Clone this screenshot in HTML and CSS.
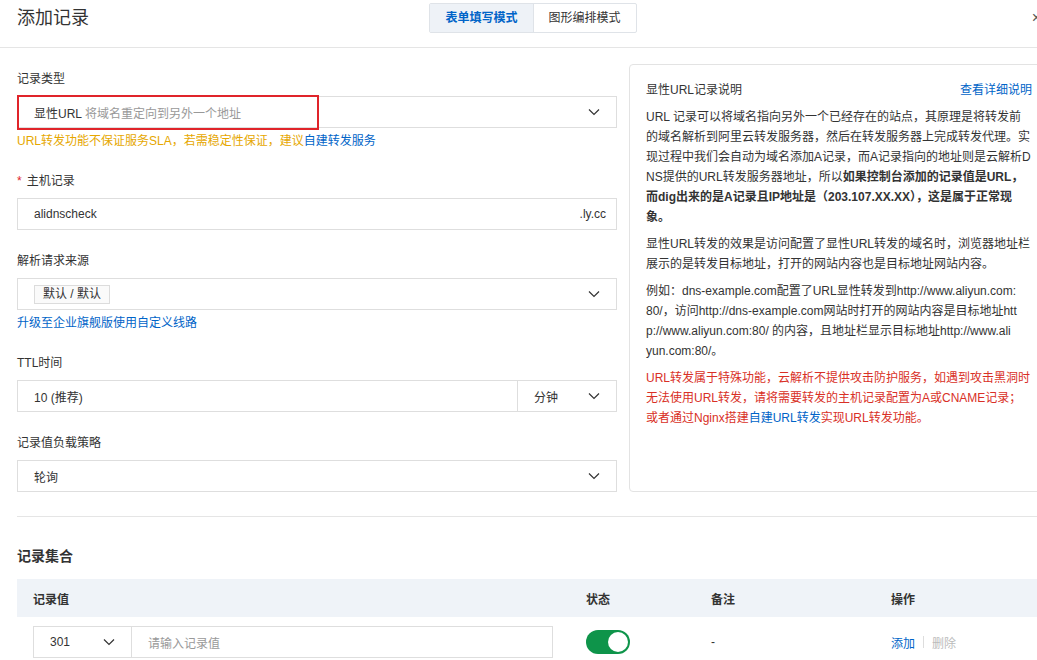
FILE: index.html
```html
<!DOCTYPE html>
<html lang="zh-CN">
<head>
<meta charset="utf-8">
<title>添加记录</title>
<link rel="stylesheet" href="styles.css">
</head>
<body>
<div class="page">
  <header class="hd">
    <h1 class="hd-title">添加记录</h1>
    <div class="tabs">
      <span class="tab active">表单填写模式</span>
      <span class="tab">图形编排模式</span>
    </div>
    <span class="close">×</span>
  </header>

  <main class="body">
    <div class="cols">
      <form class="form">
        <div class="field">
          <div class="label">记录类型</div>
          <div class="control select highlight-wrap">
            <span class="val">显性URL <span class="muted">将域名重定向到另外一个地址</span></span>
            <svg class="chev" width="12" height="12" viewBox="0 0 12 12"><path d="M1 3.5L6 8.5L11 3.5" fill="none" stroke="#333" stroke-width="1.2"/></svg>
            <span class="highlight"></span>
          </div>
          <div class="help warn">URL转发功能不保证服务SLA，若需稳定性保证，建议<a class="link">自建转发服务</a></div>
        </div>

        <div class="field">
          <div class="label"><span class="req">*</span>主机记录</div>
          <div class="control input">
            <span class="val">alidnscheck</span>
            <span class="suffix">.ly.cc</span>
          </div>
        </div>

        <div class="field">
          <div class="label">解析请求来源</div>
          <div class="control select">
            <span class="tag">默认 / 默认</span>
            <svg class="chev" width="12" height="12" viewBox="0 0 12 12"><path d="M1 3.5L6 8.5L11 3.5" fill="none" stroke="#333" stroke-width="1.2"/></svg>
          </div>
          <div class="help"><a class="link">升级至企业旗舰版使用自定义线路</a></div>
        </div>

        <div class="field">
          <div class="label">TTL时间</div>
          <div class="group">
            <div class="control g-main"><span class="val">10 (推荐)</span></div>
            <div class="control select g-unit">
              <span class="val">分钟</span>
              <svg class="chev" width="12" height="12" viewBox="0 0 12 12"><path d="M1 3.5L6 8.5L11 3.5" fill="none" stroke="#333" stroke-width="1.2"/></svg>
            </div>
          </div>
        </div>

        <div class="field">
          <div class="label">记录值负载策略</div>
          <div class="control select">
            <span class="val">轮询</span>
            <svg class="chev" width="12" height="12" viewBox="0 0 12 12"><path d="M1 3.5L6 8.5L11 3.5" fill="none" stroke="#333" stroke-width="1.2"/></svg>
          </div>
        </div>
      </form>

      <aside class="panel">
        <div class="panel-hd">
          <span class="panel-title">显性URL记录说明</span>
          <a class="link">查看详细说明</a>
        </div>
        <p>URL 记录可以将域名指向另外一个已经存在的站点，其原理是将转发前的域名解析到阿里云转发服务器，然后在转发服务器上完成转发代理。实现过程中我们会自动为域名添加A记录，而A记录指向的地址则是云解析DNS提供的URL转发服务器地址，所以<b>如果控制台添加的记录值是URL，而dig出来的是A记录且IP地址是（203.107.XX.XX），这是属于正常现象。</b></p>
        <p>显性URL转发的效果是访问配置了显性URL转发的域名时，浏览器地址栏展示的是转发目标地址，打开的网站内容也是目标地址网站内容。</p>
        <p>例如：dns-example.com配置了URL显性转发到http://www.aliyun.com:<br>80/，访问http://dns-example.com网站时打开的网站内容是目标地址htt<br>p://www.aliyun.com:80/ 的内容，且地址栏显示目标地址http://www.ali<br>yun.com:80/。</p>
        <p class="danger">URL转发属于特殊功能，云解析不提供攻击防护服务，如遇到攻击黑洞时无法使用URL转发，请将需要转发的主机记录配置为A或CNAME记录；或者通过Nginx搭建<a class="link">自建URL转发</a>实现URL转发功能。</p>
      </aside>
    </div>

    <section class="records">
      <h2 class="sec-title">记录集合</h2>
      <div class="table">
        <div class="tr th">
          <div class="td">记录值</div>
          <div class="td">状态</div>
          <div class="td">备注</div>
          <div class="td">操作</div>
        </div>
        <div class="tr">
          <div class="td c1">
            <div class="group row-group">
              <div class="control select r-type">
                <span class="val">301</span>
                <svg class="chev" width="12" height="12" viewBox="0 0 12 12"><path d="M1 3.5L6 8.5L11 3.5" fill="none" stroke="#333" stroke-width="1.2"/></svg>
              </div>
              <div class="control r-input"><span class="muted">请输入记录值</span></div>
            </div>
          </div>
          <div class="td"><span class="switch"><span class="knob"></span></span></div>
          <div class="td dash">-</div>
          <div class="td ops"><a class="link">添加</a><span class="sep"></span><span class="disabled">删除</span></div>
        </div>
      </div>
    </section>
  </main>
</div>
</body>
</html>
```

FILE: styles.css
```css
html, body {
  margin: 0;
  background: #fff;
}
body {
  font-family: "Liberation Sans", "Noto Sans CJK SC", sans-serif;
  font-size: 12px;
  color: #333;
  overflow: hidden;
}
.page {
  width: 1066px;
}
a.link {
  color: #0064c8;
  text-decoration: none;
  cursor: pointer;
}

/* header */
.hd {
  display: grid;
  grid-template-columns: 1fr auto 1fr;
  align-items: center;
  padding: 3px 17px 14px;
  border-bottom: 1px solid #e5e5e5;
}
.hd-title {
  margin: 0;
  font-size: 18px;
  font-weight: normal;
  line-height: 30px;
  color: #333;
}
.tabs {
  display: flex;
  border: 1px solid #dfe3e8;
  border-radius: 2px;
}
.tab {
  padding: 0 15px;
  line-height: 28px;
  color: #333;
}
.tab.active {
  background: #eef2f7;
  color: #0064c8;
  font-weight: bold;
  border-right: 1px solid #dfe3e8;
}
.close {
  justify-self: end;
  font-size: 16px;
  color: #555;
  margin-right: 8px;
}

/* body */
.body {
  padding: 16px 17px 0;
}
.cols {
  display: flex;
  gap: 12px;
}
.form {
  width: 600px;
  padding-top: 6px;
}
.field {
  margin-bottom: 22px;
}
.field:last-child {
  margin-bottom: 0;
}
.label {
  line-height: 18px;
  margin-bottom: 8px;
}
.req {
  color: #e0242a;
  margin-right: 5px;
}
.control {
  position: relative;
  height: 32px;
  box-sizing: border-box;
  border: 1px solid #dedede;
  display: flex;
  align-items: center;
  padding: 0 16px;
  background: #fff;
}
.control.select {
  justify-content: space-between;
}
.control.input {
  justify-content: space-between;
  padding-right: 10px;
}
.muted {
  color: #999;
}
.chev {
  flex: none;
}
.highlight {
  position: absolute;
  left: -1px;
  top: -2px;
  width: 302px;
  height: 35px;
  box-sizing: border-box;
  border: 2px solid #e0242a;
  pointer-events: none;
}
.help {
  margin-top: 4px;
  line-height: 18px;
}
.help.warn {
  color: #e6a700;
}
.tag {
  border: 1px solid #dcdcdc;
  background: #fafafa;
  padding: 0 8px;
  line-height: 17px;
}
.group {
  display: flex;
}
.g-main {
  flex: 1;
}
.g-unit {
  width: 100px;
  margin-left: -1px;
}

/* panel */
.panel {
  width: 420px;
  box-sizing: border-box;
  border: 1px solid #e3e3e3;
  border-radius: 4px;
  padding: 16px;
}
.panel-hd {
  display: flex;
  justify-content: space-between;
  line-height: 18px;
  margin-bottom: 8px;
}
.panel p {
  margin: 0 0 7px;
  line-height: 20px;
  word-break: break-all;
}
.panel p.danger {
  color: #d93026;
}

/* records */
.records {
  margin-top: 24px;
  border-top: 1px solid #e5e5e5;
  padding-top: 29px;
}
.sec-title {
  margin: 0 0 13px;
  font-size: 14px;
  line-height: 20px;
  font-weight: bold;
}
.table {
  margin-right: -40px;
}
.tr {
  display: grid;
  grid-template-columns: 553px 125px 180px 1fr;
  align-items: center;
}
.th {
  background: #eff3f8;
  height: 38px;
  font-weight: bold;
}
.td {
  padding-left: 16px;
}
.tr:not(.th) {
  padding: 9px 0;
}
.c1 {
  padding-right: 17px;
}
.r-type {
  width: 99px;
}
.r-input {
  flex: 1;
  margin-left: -1px;
}
.switch {
  display: block;
  width: 44px;
  height: 24px;
  border-radius: 12px;
  background: #0e944a;
  position: relative;
}
.knob {
  position: absolute;
  right: 2px;
  top: 2px;
  width: 20px;
  height: 20px;
  border-radius: 50%;
  background: #fff;
}
.dash {
  color: #333;
}
.ops {
  display: flex;
  align-items: center;
}
.sep {
  width: 1px;
  height: 12px;
  background: #ddd;
  margin: 0 8px;
}
.disabled {
  color: #bbb;
}
```
